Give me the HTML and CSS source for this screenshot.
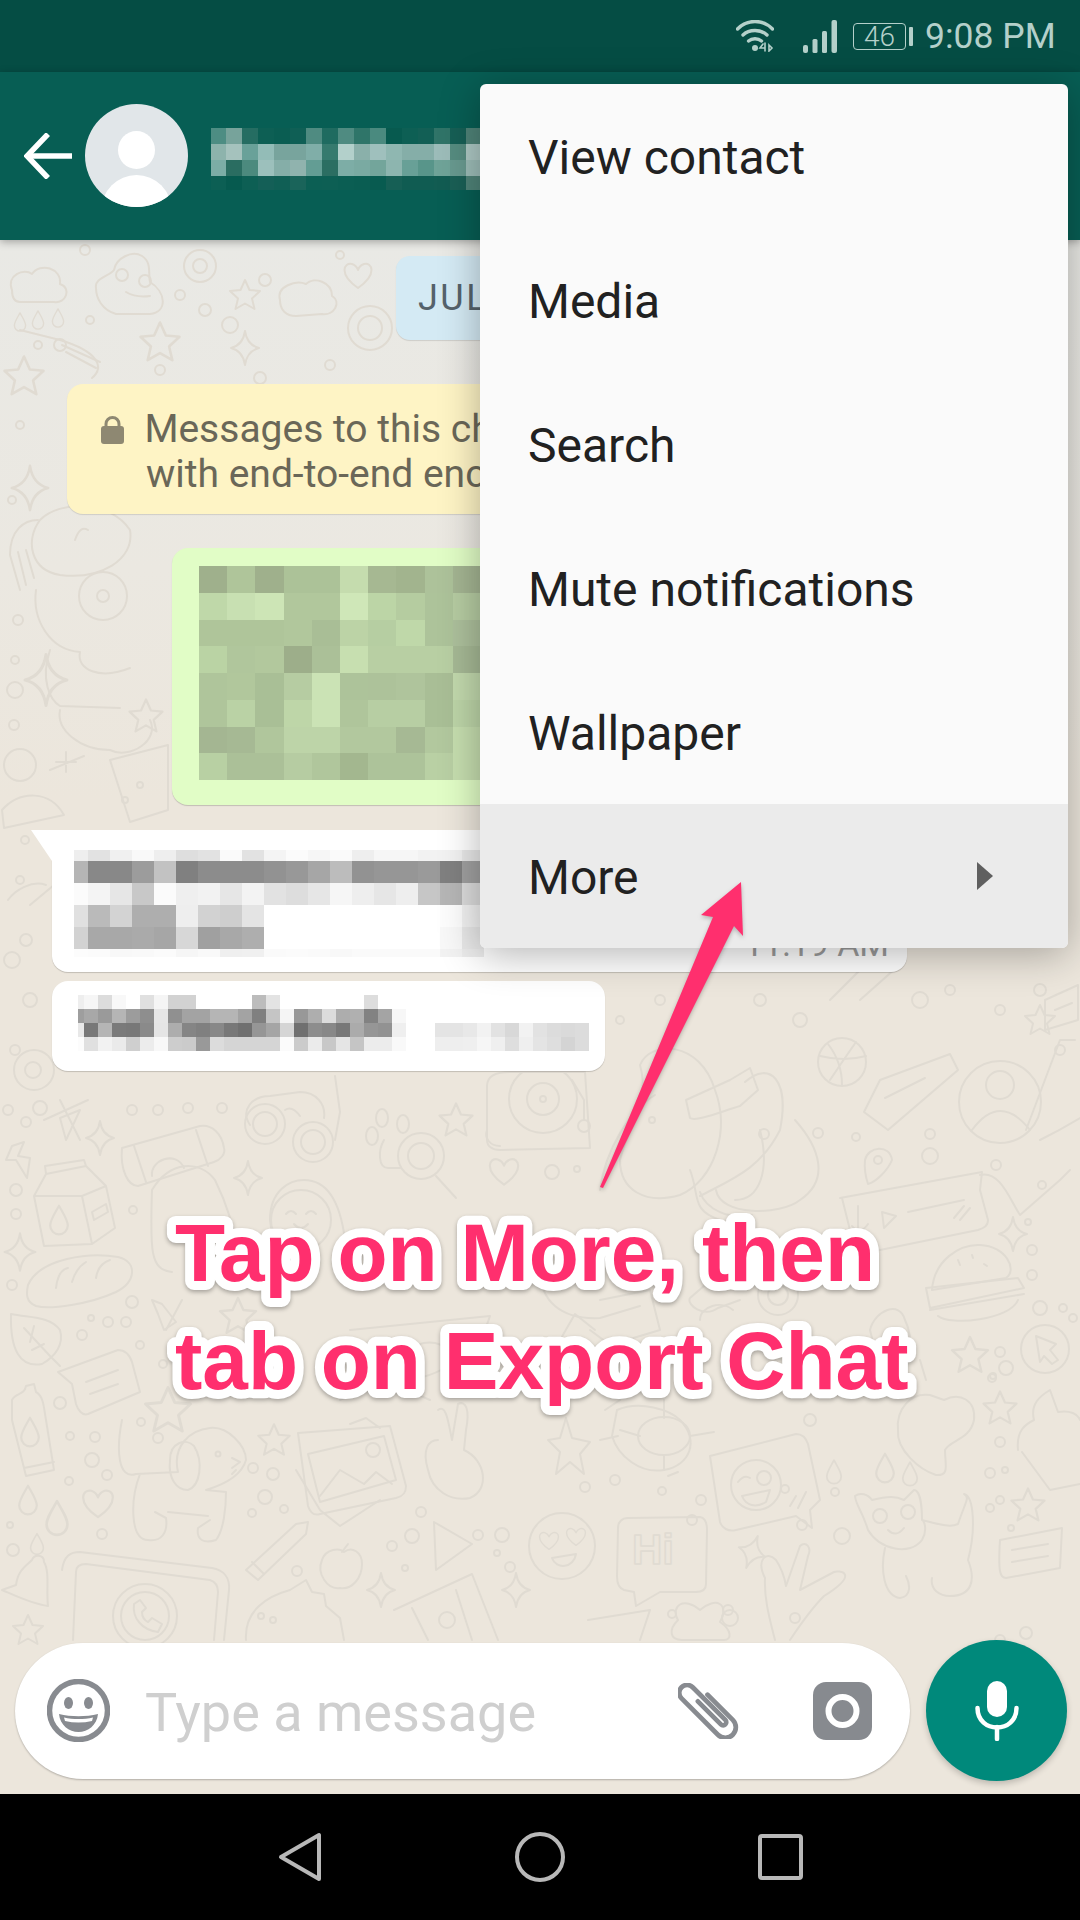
FILE: index.html
```html
<!DOCTYPE html>
<html lang="en">
<head>
    <meta charset="utf-8">
    <title>Export chat</title>
    <link rel="stylesheet" href="styles.css">
</head>
<body>
    <div class="phone">
        <!-- Status bar -->
        <div class="statusbar">
            <svg class="wifi" width="38" height="32" viewBox="0 0 38 32" fill="none" stroke="#b4d0ca" stroke-width="3.4" stroke-linecap="round">
                <path d="M1.5 9 C11 -1 27 -1 36.5 9"/>
                <path d="M7 15 C13 9 25 9 31 15"/>
                <path d="M12.5 21 C16 18 22 18 25.5 21"/>
                <circle cx="19" cy="28" r="3" fill="#b4d0ca" stroke="none"/>
                <path d="M27 24 L24 28 H29 M29 23 V31 M33 25 L36 28 L33 31 Z" stroke-width="1.6"/>
            </svg>
            <svg class="signal" width="34" height="33" viewBox="0 0 34 33" fill="#b4d0ca">
                <rect x="0" y="25" width="5" height="8" rx="2"/>
                <rect x="9.5" y="19" width="5" height="14" rx="1.5"/>
                <rect x="19" y="11" width="5" height="22" rx="1.5"/>
                <rect x="28.5" y="0" width="5.5" height="33" rx="2"/>
            </svg>
            <div class="battery"><span class="battery-level">46</span></div>
            <div class="battery-nub"></div>
            <span class="clock">9:08 PM</span>
        </div>

        <!-- Toolbar -->
        <div class="toolbar">
            <svg class="back" width="48" height="46" viewBox="0 0 48 46" fill="none" stroke="#fff" stroke-width="5.5">
                <path d="M48 23 H4"/>
                <path d="M24 1 L3 23 L24 45"/>
            </svg>
            <svg class="avatar" width="103" height="103" viewBox="0 0 103 103">
                <defs><clipPath id="avatar-clip"><circle cx="51.5" cy="51.5" r="51.5"/></clipPath></defs>
                <circle cx="51.5" cy="51.5" r="51.5" fill="#e1e6e9"/>
                <g clip-path="url(#avatar-clip)" fill="#fff">
                    <ellipse cx="51.5" cy="46" rx="18.5" ry="19"/>
                    <ellipse cx="51.5" cy="106" rx="35" ry="35"/>
                </g>
            </svg>
            <div class="mosaic mosaic-name" data-mosaic="name"></div>
        </div>

        <!-- Chat -->
        <div class="chat">
            <svg class="wallpaper" width="1080" height="1554" viewBox="0 240 1080 1554" fill="none" stroke="#e0dbd2" stroke-width="2" stroke-linecap="round" stroke-linejoin="round">
                <defs>
                    <path id="star" d="M0 -15 L4.5 -5 15 -4 7 3.5 9.5 14 0 8.5 -9.5 14 -7 3.5 -15 -4 -4.5 -5 Z"/>
                    <path id="sparkle" d="M0 -17 Q2 -3 14 0 Q2 3 0 17 Q-2 3 -14 0 Q-2 -3 0 -17 Z"/>
                    <path id="drop" d="M0 -13 C5 -4 8 0 8 5 A8 8 0 0 1 -8 5 C-8 0 -5 -4 0 -13 Z"/>
                    <path id="heart" d="M0 12 C-20 -2 -14 -14 -6 -12 C-3 -11 -1 -9 0 -6 C1 -9 3 -11 6 -12 C14 -14 20 -2 0 12 Z"/>
                </defs>

                <!-- top left -->
                <path d="M12 290 C6 275 24 268 32 274 C40 262 62 268 60 284 C72 288 66 304 54 302 L20 302 C14 302 12 296 12 290 Z"/>
                <path d="M96 288 C94 278 110 276 114 270 C116 258 132 250 142 256 C152 262 148 274 150 282 C166 292 168 312 150 314 L116 314 C102 310 96 298 96 288 Z"/>
                <circle cx="122" cy="275" r="6"/><circle cx="145" cy="281" r="6"/>
                <path d="M126 292 Q136 298 150 296"/>
                <circle cx="200" cy="266" r="16"/><circle cx="200" cy="266" r="7"/>
                <use href="#star" transform="translate(245 295)"/>
                <path d="M280 300 C276 286 296 280 306 284 C314 276 332 282 332 296 C342 302 334 316 322 314 L296 316 C286 316 280 310 280 300 Z"/>
                <use href="#heart" transform="translate(358 276)"/>
                <circle cx="370" cy="328" r="22"/><circle cx="370" cy="328" r="12"/>
                <use href="#sparkle" transform="translate(245 348)"/>
                <use href="#star" transform="translate(160 342) scale(1.3)"/>
                <path d="M20 330 L60 340 C100 352 104 368 92 378"/>
                <path d="M62 345 L100 362 M66 352 L96 368"/>
                <use href="#star" transform="translate(24 376) scale(1.3)"/>
                <use href="#drop" transform="translate(38 320) scale(.7)"/>
                <use href="#drop" transform="translate(20 322) scale(.7)"/>
                <use href="#drop" transform="translate(58 318) scale(.7)"/>
                <use href="#sparkle" transform="translate(30 488) scale(1.3)"/>

                <!-- left of the bubbles -->
                <path d="M40 520 C60 500 110 500 130 530 C135 560 100 580 60 575 C30 570 25 540 40 520 Z"/>
                <path d="M75 540 Q80 525 88 530"/>
                <path d="M10 555 C10 530 24 520 38 520 M20 590 L10 555 M26 585 L18 552 M34 578 L26 550"/>
                <path d="M36 590 C32 620 50 650 80 652 C76 670 100 680 130 668 M50 650 C40 680 50 700 60 706 L120 708"/>
                <path d="M60 710 C56 730 80 750 110 750 M110 750 C130 760 160 740 150 720"/>
                <circle cx="103" cy="596" r="24"/><circle cx="103" cy="596" r="6"/>
                <use href="#sparkle" transform="translate(46 680) scale(1.5)"/>
                <use href="#star" transform="translate(146 716) scale(1.1)"/>
                <circle cx="20" cy="765" r="16"/>
                <path d="M56 762 L76 762 M66 752 L66 772 M50 770 L84 756"/>
                <path d="M2 810 C20 790 50 790 64 815 L4 828 Z"/>
                <path d="M110 760 L168 745 L168 810 L130 822 Z"/>
                <circle cx="140" cy="785" r="3"/><circle cx="125" cy="800" r="3"/>
                <path d="M30 905 L60 880"/><path d="M8 900 C15 890 32 880 46 885"/>
                <path d="M14 1070 a20 20 0 1 0 40 0 a20 20 0 1 0 -40 0"/>
                <circle cx="33" cy="1070" r="8"/>

                <!-- below the bubbles -->
                <path d="M487 1086 C487 1076 495 1072 510 1072 L585 1072 L590 1148 L500 1150 C492 1150 487 1146 487 1140 Z"/>
                <circle cx="543" cy="1099" r="34"/><circle cx="543" cy="1099" r="16"/><circle cx="543" cy="1099" r="3"/>
                <path d="M572 1080 L584 1100 V1120"/>
                <circle cx="584" cy="1126" r="6"/>
                <path d="M250 1125 C240 1110 252 1096 270 1096 L300 1092 C316 1092 326 1104 324 1118"/>
                <circle cx="265" cy="1124" r="20"/><circle cx="265" cy="1124" r="12"/>
                <circle cx="313" cy="1142" r="20"/><circle cx="313" cy="1142" r="12"/>
                <path d="M285 1110 Q292 1105 300 1116 M335 1140 L340 1112 L335 1076"/>
                <ellipse cx="372" cy="1136" rx="6" ry="9"/><ellipse cx="382" cy="1118" rx="6" ry="9"/><ellipse cx="403" cy="1124" rx="6" ry="9"/>
                <circle cx="421" cy="1156" r="23"/><circle cx="421" cy="1156" r="13"/>
                <path d="M384 1140 C378 1150 378 1168 388 1168 L400 1168 M436 1176 L456 1198"/>
                <use href="#star" transform="translate(456 1120) scale(1.1)"/>
                <path d="M487 1130 C484 1138 490 1146 500 1146"/>
                <use href="#heart" transform="translate(504 1172) scale(1.05)"/>
                <path d="M640 1065 C650 1040 700 1040 715 1090 C730 1130 715 1180 680 1195 C645 1205 620 1190 620 1160 C630 1120 650 1100 640 1065 Z"/>
                <path d="M600 1190 C605 1150 630 1110 655 1095"/>
                <path d="M686 1100 L730 1080 L750 1068 L758 1090 L740 1106 C720 1112 696 1122 690 1118 Z"/>
                <path d="M745 1082 C770 1060 790 1080 780 1130 C760 1170 730 1180 700 1196 M760 1130 C770 1170 760 1200 735 1200"/>
                <circle cx="842" cy="1062" r="24"/><path d="M820 1056 Q844 1062 866 1056 M828 1044 Q842 1062 842 1085 M856 1042 Q842 1062 830 1080"/>
                <path d="M880 1080 L950 1054 L958 1070 L888 1130 L864 1112 Z M885 1098 L925 1078"/>
                <path d="M830 1000 L880 950 M860 1000 L905 960"/>
                <circle cx="1000" cy="1102" r="41"/><circle cx="1000" cy="1085" r="14"/><path d="M972 1130 Q1000 1092 1030 1130"/>
                <path d="M1026 1130 L1060 1040 L1075 1040"/>
                <path d="M1045 1000 L1078 985 L1078 1020 L1045 1030 Z M1055 1010 L1072 1003"/>
                <use href="#star" transform="translate(1040 1020)"/>

                <!-- left column -->
                <path d="M12 1146 L24 1142 L18 1156 L30 1158 L27 1178 L16 1160 L6 1160 Z"/>
                <path d="M34 1196 L46 1174 L86 1166 L106 1186 L82 1196 Z M82 1196 L92 1244 L44 1246 L34 1196 Z M82 1196 L106 1186 L115 1228 L92 1244 M46 1174 L45 1166 L84 1160 L86 1166"/>
                <use href="#drop" transform="translate(59 1220) scale(1.1)"/>
                <path d="M92 1212 L106 1204 L108 1212 L94 1220 Z"/>
                <path d="M122 1148 L200 1126 C212 1124 222 1134 224 1148 C226 1154 220 1160 214 1162 L138 1186 C128 1186 120 1170 122 1148 Z M134 1146 L146 1182 M196 1130 L208 1166"/>
                <path d="M152 1176 C150 1160 176 1150 184 1168"/>
                <path d="M152 1190 C150 1250 150 1270 172 1272 M152 1190 C170 1160 200 1160 215 1180 C225 1200 235 1230 240 1260"/>
                <use href="#sparkle" transform="translate(100 1138)"/>
                <use href="#sparkle" transform="translate(248 1178)"/>
                <use href="#sparkle" transform="translate(20 1252) scale(1.1)"/>
                <path d="M60 1118 L80 1110 L66 1140 Z M44 1120 L88 1100 M60 1100 L80 1140"/>
                <path d="M28 1285 C40 1258 90 1252 118 1257 C138 1262 136 1282 116 1292 C90 1304 50 1310 36 1306 C26 1302 26 1294 28 1285 Z M56 1288 Q58 1270 68 1268 M72 1282 Q76 1268 86 1262 M96 1278 Q98 1264 110 1260"/>
                <path d="M11 1314 C30 1318 50 1316 60 1330 C64 1344 56 1356 42 1364 C20 1368 10 1350 11 1314 Z M24 1328 L50 1356 M34 1326 L30 1342 M44 1344 L32 1350 M50 1356 L60 1366"/>
                <path d="M58 1372 L118 1350 C126 1350 130 1356 132 1362 L140 1392 L88 1414 C82 1416 78 1410 76 1404 L72 1384 Z M86 1382 L118 1370 M90 1394 L118 1384"/>
                <path d="M12 1400 C16 1392 24 1396 26 1386 L34 1384 L36 1392 C44 1396 44 1410 46 1420 L54 1470 L26 1476 L12 1420 Z M24 1468 L54 1462"/>
                <use href="#drop" transform="translate(30 1432) scale(1.1)"/>
                <use href="#star" transform="translate(168 1410) scale(1.5)"/>
                <path d="M122 1420 C116 1450 118 1480 136 1474 L178 1472 C172 1446 190 1430 210 1428 C228 1426 246 1446 246 1460 C242 1474 226 1484 206 1490 L226 1492 C226 1506 224 1530 216 1540 C204 1544 196 1540 198 1528 L210 1520 M168 1512 L208 1516 M140 1474 C130 1500 130 1540 148 1540 C162 1542 168 1532 166 1518 L155 1512"/>
                <path d="M170 1460 C170 1442 186 1438 194 1446 C204 1462 200 1486 188 1490 C176 1490 168 1478 170 1460 Z"/>
                <circle cx="218" cy="1454" r="2.5"/><path d="M232 1458 L240 1462 L232 1468 M236 1470 L232 1474"/>
                <use href="#star" transform="translate(274 1440) scale(1.05)"/>
                <use href="#drop" transform="translate(28 1500) scale(1.1)"/>
                <use href="#drop" transform="translate(57 1518) scale(1.3)"/>
                <use href="#drop" transform="translate(37 1544) scale(.8)"/>
                <use href="#heart" transform="translate(98 1504) scale(1.1)"/>
                <path d="M16 1585 C18 1570 26 1566 32 1560 C34 1554 44 1554 44 1562 C50 1572 46 1590 48 1606 C32 1604 16 1596 2 1590 Z"/>
                <use href="#star" transform="translate(28 1630)"/>
                <path d="M62 1570 C64 1556 70 1552 80 1552 L212 1568 C224 1570 230 1578 229 1590 L224 1640 M73 1640 L76 1572 C76 1566 80 1564 86 1564 L210 1580 C216 1582 218 1586 218 1592 L214 1640"/>
                <circle cx="145" cy="1616" r="32"/><circle cx="145" cy="1616" r="24"/>
                <path d="M134 1604 C132 1618 142 1630 158 1632 L162 1624 L152 1618 L148 1622 C144 1620 142 1616 142 1612 L146 1608 L140 1600 Z"/>

                <!-- middle -->
                <path d="M270 1220 C270 1190 290 1180 304 1180 C326 1180 340 1200 345 1240 L340 1270 M270 1220 C272 1240 280 1258 290 1264"/>
                <circle cx="301" cy="1220" r="30"/>
                <path d="M286 1214 Q291 1208 296 1214 M306 1214 Q311 1208 316 1214 M294 1224 Q301 1232 308 1224"/>
                <path d="M298 1433 L390 1426 L406 1486 C406 1492 404 1496 396 1498 L320 1514 C314 1516 310 1512 308 1506 Z"/>
                <path d="M308 1454 L384 1436 L396 1480 L320 1502 Z"/>
                <circle cx="373" cy="1450" r="7"/>
                <path d="M320 1496 L340 1470 L364 1484 L376 1472 L392 1484"/>
                <path d="M350 1424 L366 1418 L380 1428 M296 1470 L320 1510 L340 1526 L380 1500"/>
                <path d="M438 1410 C446 1404 448 1420 452 1440 L458 1404 C466 1400 470 1410 466 1430 L464 1450 C486 1460 490 1490 470 1498 C450 1502 432 1490 428 1470 C422 1450 428 1440 438 1440"/>
                <use href="#star" transform="translate(238 1316) scale(1.2)"/>
                <path d="M166 1330 L182 1300"/>
                <path d="M152 1300 L162 1304 L176 1322 L164 1330 L158 1314 Z"/>
                <path d="M246 1570 L296 1524 L308 1522 L306 1534 L258 1580 Z M252 1562 L264 1574"/>
                <path d="M322 1560 C326 1548 340 1548 344 1552 C352 1546 362 1552 362 1564 C362 1578 352 1590 340 1588 C328 1590 316 1574 322 1560 Z M342 1552 L348 1544"/>
                <path d="M434 1522 L472 1544 L436 1570 Z"/>
                <use href="#sparkle" transform="translate(381 1590)"/>
                <use href="#sparkle" transform="translate(516 1590)"/>
                <path d="M394 1610 L472 1574 L498 1640 M412 1608 L428 1640 M456 1590 L472 1640"/>
                <circle cx="447" cy="1620" r="8"/>
                <path d="M246 1640 C244 1610 268 1596 290 1590 L306 1580 L312 1592 L324 1594 L326 1606 L340 1618 L344 1640"/>
                <circle cx="261" cy="1616" r="3"/><circle cx="273" cy="1620" r="3"/>
                <circle cx="562" cy="1546" r="33"/>
                <use href="#heart" transform="translate(549 1541) scale(.7)"/>
                <use href="#heart" transform="translate(576 1537) scale(.7)"/>
                <path d="M552 1558 L576 1554 C574 1568 556 1570 552 1558 Z"/>
                <path d="M628 1518 L700 1517 C706 1518 707 1524 707 1530 L706 1584 C706 1590 702 1592 696 1592 L660 1592 L636 1606 L634 1592 L624 1590 C618 1588 617 1582 617 1576 L618 1528 C618 1522 622 1518 628 1518 Z"/>
                <text class="doodle-hi" x="632" y="1564">Hi</text>
                <path d="M617 1410 C640 1400 670 1410 680 1420 C700 1440 690 1466 664 1470 C640 1474 618 1456 612 1436 Z"/>
                <ellipse cx="664" cy="1436" rx="26" ry="19"/>
                <path d="M664 1418 L664 1400 M690 1436 L714 1432 M664 1456 L664 1470 M640 1436 L620 1430"/>
                <path d="M620 1400 L605 1410 M600 1440 L618 1436 M678 1472 L668 1476"/>
                <path d="M548 1440 L560 1438 L566 1418 L572 1438 L590 1442 L580 1454 L584 1474 L570 1462 L556 1474 L560 1452 Z"/>
                <path d="M710 1456 L796 1434 C802 1434 806 1438 808 1444 L820 1500 L810 1510 L812 1528 L796 1516 L736 1530 C728 1532 722 1528 720 1522 Z"/>
                <circle cx="756" cy="1485" r="25"/><circle cx="764" cy="1478" r="7"/>
                <path d="M738 1482 Q744 1474 750 1478 M742 1496 L770 1490 L766 1502 C756 1508 746 1506 742 1496 Z"/>
                <path d="M790 1506 L796 1496 M798 1508 L806 1492"/>
                <path d="M765 1578 C756 1560 766 1550 776 1560 C780 1566 784 1574 786 1586 L800 1546 C806 1540 812 1548 808 1556 L800 1590 L834 1572 C838 1570 862 1572 824 1596 C810 1610 800 1625 790 1640 M765 1578 C764 1600 770 1620 775 1640"/>
                <use href="#sparkle" transform="translate(752 1552) rotate(20)"/>
                <path d="M678 1620 C670 1606 684 1596 700 1610 C716 1596 730 1604 720 1622 C732 1630 732 1640 724 1640 L682 1640 C670 1640 668 1630 678 1620 Z"/>
                <path d="M640 1640 L650 1610 L588 1620"/>
                <path d="M855 1496 C860 1492 868 1494 872 1500 C888 1496 896 1496 904 1500 L914 1490 C920 1490 922 1506 922 1520 C938 1524 950 1528 958 1524 C966 1500 970 1498 964 1494 C974 1496 976 1530 968 1560 C976 1580 972 1596 950 1596 C940 1596 930 1590 932 1578 M885 1548 C880 1570 884 1596 900 1598 C912 1596 910 1584 906 1576 M868 1530 C862 1510 856 1506 855 1496 M868 1530 C880 1550 910 1556 922 1540 C928 1530 924 1520 922 1520"/>
                <circle cx="880" cy="1516" r="7"/><circle cx="908" cy="1512" r="7"/>
                <path d="M888 1530 Q896 1538 904 1528"/>
                <path d="M1000 1540 L1062 1528 L1060 1568 L1006 1578 C1000 1578 998 1572 1000 1540 Z M1012 1550 L1048 1544 M1012 1562 L1048 1556"/>
                <use href="#star" transform="translate(1028 1505) scale(1.1)"/>
                <use href="#star" transform="translate(1000 1408) scale(1.1)"/>
                <use href="#star" transform="translate(970 1355) scale(1.2)"/>
                <path d="M920 1360 L926 1380"/>
                <path d="M1018 1450 C1016 1430 1026 1424 1034 1420 C1030 1404 1040 1396 1050 1390 L1058 1412 C1070 1410 1078 1414 1080 1420 M1022 1452 L1050 1490 L1080 1484"/>
                <path d="M898 1430 C896 1410 910 1392 930 1395 L944 1400 C960 1392 976 1400 974 1420 C970 1440 950 1440 945 1450 C945 1465 950 1476 936 1475 C920 1470 896 1450 898 1430 Z"/>
                <use href="#drop" transform="translate(834 1472) scale(.9)"/>
                <use href="#drop" transform="translate(885 1468) scale(1.1)"/>
                <use href="#drop" transform="translate(910 1474) scale(.9)"/>
                <circle cx="1045" cy="1349" r="24"/>
                <path d="M1036 1336 L1056 1344 L1050 1350 L1058 1360 L1052 1364 L1044 1356 L1040 1362 Z"/>
                <path d="M840 1198 L982 1172 L980 1190 L988 1220 C988 1226 984 1228 978 1230 L880 1250 M842 1198 L850 1230"/>
                <path d="M858 1206 V1228 M852 1226 Q860 1236 868 1224 M882 1212 L884 1228 L896 1216 Z M908 1212 L964 1200"/>
                <path d="M954 1218 L964 1206 M960 1220 L970 1208"/>
                <path d="M980 1175 C1000 1170 1010 1200 1020 1215 L1060 1180 L1070 1170"/>
                <use href="#sparkle" transform="translate(1013 1234)"/>
                <path d="M932 1290 C934 1260 960 1244 980 1245 C1006 1246 1018 1270 1006 1278 Z"/>
                <path d="M926 1288 L1018 1278 L1024 1288 L930 1308 Z M930 1310 L1024 1294 M938 1316 C950 1326 1010 1320 1018 1300"/>
                <path d="M958 1260 l2 5 M972 1255 l1 3 M984 1264 l3 2"/>
                <path d="M1040 1140 C1060 1130 1080 1118 1080 1118"/>
                <path d="M865 1160 C868 1146 890 1144 892 1160 C888 1170 876 1182 868 1184 C866 1178 864 1170 865 1160 Z"/>
                <circle cx="878" cy="1160" r="4"/>
                <path d="M795 1120 C820 1148 830 1180 800 1200 C780 1216 720 1216 716 1190"/>
                <path d="M690 1170 C700 1195 690 1210 720 1220"/>
                <path d="M700 1192 C706 1210 730 1220 752 1215"/>
                <path d="M740 1260 C720 1270 700 1290 690 1298 C686 1305 704 1318 718 1308 L740 1300"/>
                <path d="M700 1320 C700 1306 722 1300 733 1310"/>
                <path d="M610 1240 L540 1270 C540 1300 560 1320 600 1318 L640 1306"/>
                <path d="M600 1300 L650 1290 L660 1330 L610 1345"/>
                <circle cx="778" cy="1295" r="20"/><circle cx="778" cy="1295" r="10"/>
                <path d="M560 1340 L575 1314 L595 1330 M590 1330 L610 1345"/>
                <path d="M870 1330 C875 1310 900 1300 905 1320 C915 1340 910 1370 895 1380 L880 1370 Z"/>
                <path d="M350 1330 L450 1320 L490 1316 C480 1350 440 1380 400 1380"/>
                <path d="M410 1350 C420 1340 440 1340 446 1350 M340 1400 C360 1390 390 1380 430 1400"/>

                <!-- little dots -->
                <g>
                    <circle cx="8" cy="1110" r="5"/><circle cx="26" cy="1122" r="5"/><circle cx="40" cy="1108" r="7"/>
                    <circle cx="132" cy="1110" r="5"/><circle cx="158" cy="1110" r="5"/><circle cx="188" cy="1108" r="5"/><circle cx="222" cy="1108" r="5"/>
                    <circle cx="16" cy="1190" r="6"/><circle cx="133" cy="1210" r="4"/><circle cx="16" cy="1214" r="5"/>
                    <circle cx="12" cy="1285" r="5"/><circle cx="132" cy="1302" r="6"/><circle cx="91" cy="1318" r="3"/><circle cx="108" cy="1322" r="5"/><circle cx="126" cy="1322" r="5"/>
                    <circle cx="82" cy="1335" r="5"/><circle cx="140" cy="1345" r="4"/><circle cx="163" cy="1364" r="4"/>
                    <circle cx="60" cy="1403" r="6"/><circle cx="141" cy="1422" r="4"/><circle cx="158" cy="1438" r="5"/>
                    <circle cx="70" cy="1436" r="4"/><circle cx="95" cy="1437" r="5"/><circle cx="92" cy="1460" r="7"/><circle cx="107" cy="1475" r="5"/><circle cx="69" cy="1481" r="4"/>
                    <circle cx="10" cy="1525" r="3"/><circle cx="13" cy="1550" r="6"/><circle cx="102" cy="1534" r="5"/>
                    <circle cx="253" cy="1468" r="5"/><circle cx="265" cy="1497" r="7"/><circle cx="252" cy="1513" r="4"/><circle cx="284" cy="1509" r="4"/><circle cx="273" cy="1474" r="6"/>
                    <circle cx="421" cy="1512" r="5"/><circle cx="392" cy="1546" r="5"/><circle cx="412" cy="1536" r="7"/><circle cx="297" cy="1571" r="5"/><circle cx="405" cy="1568" r="3"/><circle cx="478" cy="1535" r="5"/><circle cx="502" cy="1535" r="7"/><circle cx="497" cy="1553" r="3"/><circle cx="510" cy="1567" r="5"/>
                    <circle cx="552" cy="1172" r="7"/><circle cx="577" cy="1169" r="3"/><circle cx="652" cy="1120" r="3"/><circle cx="764" cy="1134" r="5"/><circle cx="818" cy="1133" r="5"/><circle cx="856" cy="1137" r="4"/><circle cx="930" cy="1134" r="5"/><circle cx="930" cy="1156" r="8"/>
                    <circle cx="1042" cy="1185" r="4"/><circle cx="996" cy="1165" r="5"/><circle cx="1028" cy="1222" r="3"/><circle cx="1032" cy="1250" r="5"/><circle cx="1032" cy="1275" r="5"/>
                    <circle cx="1040" cy="1308" r="7"/><circle cx="1063" cy="1308" r="4"/><circle cx="1073" cy="1318" r="4"/><circle cx="1000" cy="1352" r="5"/><circle cx="1006" cy="1368" r="7"/><circle cx="993" cy="1376" r="3"/><circle cx="992" cy="1378" r="4"/>
                    <circle cx="810" cy="1420" r="6"/><circle cx="1000" cy="1442" r="5"/><circle cx="990" cy="1473" r="5"/><circle cx="1005" cy="1470" r="3"/><circle cx="1000" cy="1500" r="4"/><circle cx="1011" cy="1528" r="3"/><circle cx="990" cy="1508" r="4"/>
                    <circle cx="785" cy="1489" r="4"/><circle cx="835" cy="1492" r="4"/><circle cx="585" cy="1487" r="5"/><circle cx="615" cy="1480" r="5"/><circle cx="662" cy="1491" r="4"/><circle cx="701" cy="1500" r="5"/>
                    <circle cx="730" cy="1618" r="8"/><circle cx="672" cy="1614" r="4"/><circle cx="1000" cy="1640" r="5"/><circle cx="1026" cy="1633" r="6"/>
                    <circle cx="728" cy="1610" r="5"/><circle cx="692" cy="1520" r="5"/><circle cx="802" cy="1525" r="5"/><circle cx="842" cy="1536" r="8"/><circle cx="795" cy="1618" r="5"/>
                    <circle cx="30" cy="1000" r="7"/><circle cx="15" cy="1050" r="5"/><circle cx="660" cy="1000" r="5"/><circle cx="760" cy="1000" r="6"/><circle cx="620" cy="1020" r="4"/><circle cx="950" cy="990" r="5"/><circle cx="920" cy="1000" r="8"/><circle cx="1000" cy="1010" r="5"/><circle cx="800" cy="1020" r="7"/><circle cx="1040" cy="990" r="6"/><circle cx="1060" cy="1050" r="5"/>
                    <circle cx="85" cy="250" r="5"/><circle cx="90" cy="320" r="4"/><circle cx="60" cy="345" r="6"/><circle cx="38" cy="345" r="4"/><circle cx="180" cy="295" r="5"/><circle cx="205" cy="310" r="6"/><circle cx="230" cy="325" r="8"/><circle cx="265" cy="280" r="6"/><circle cx="340" cy="255" r="4"/><circle cx="160" cy="370" r="5"/><circle cx="260" cy="378" r="6"/><circle cx="330" cy="365" r="5"/><circle cx="20" cy="425" r="4"/><circle cx="12" cy="500" r="4"/><circle cx="18" cy="620" r="5"/>
                    <circle cx="15" cy="660" r="4"/><circle cx="15" cy="690" r="8"/><circle cx="14" cy="725" r="5"/><circle cx="25" cy="840" r="4"/><circle cx="20" cy="880" r="4"/><circle cx="26" cy="940" r="6"/><circle cx="12" cy="960" r="8"/>
                </g>
            </svg>

            <div class="date-chip">JULY 25, 2018</div>

            <div class="notice">
                <span class="notice-line notice-first">
                    <svg class="lock" width="23" height="28" viewBox="0 0 23 28" fill="#8e8872">
                        <path d="M5 12 V8 a6.5 6.5 0 0 1 13 0 V12" fill="none" stroke="#8e8872" stroke-width="3"/>
                        <rect x="0" y="10" width="23" height="18" rx="3"/>
                    </svg>Messages to this chat and calls are now secured</span>
                <span class="notice-line">with end-to-end encryption. Tap for more info.</span>
            </div>

            <div class="bubble bubble-out">
                <div class="mosaic mosaic-green" data-mosaic="green"></div>
            </div>

            <div class="bubble bubble-in bubble-first">
                <div class="mosaic mosaic-first" data-mosaic="first"></div>
                <span class="msg-time">11:19 AM</span>
            </div>

            <div class="bubble bubble-in bubble-second">
                <div class="mosaic mosaic-second" data-mosaic="second"></div>
                <div class="mosaic mosaic-time" data-mosaic="time"></div>
            </div>

            <!-- Message input -->
            <div class="input-row">
                <div class="composer">
                    <svg class="icon-emoji" width="63" height="63" viewBox="0 0 63 63">
                        <circle cx="31.5" cy="31.5" r="29" fill="none" stroke="#888b90" stroke-width="5.5"/>
                        <ellipse cx="21.5" cy="24" rx="4.5" ry="6" fill="#888b90"/>
                        <ellipse cx="41.5" cy="24" rx="4.5" ry="6" fill="#888b90"/>
                        <path d="M12 35 C24 38 39 38 51 35 C50 46 41 53 31.5 53 C22 53 13 46 12 35 Z" fill="#888b90"/>
                        <path d="M17 38.5 C26 40.5 37 40.5 46 38.5 L45 42 C36 44 27 44 18 42 Z" fill="#fff"/>
                    </svg>
                    <span class="placeholder">Type a message</span>
                    <svg class="icon-clip" width="62" height="56" viewBox="0 0 62 56" fill="none" stroke="#888b90" stroke-width="4.5" stroke-linecap="round">
                        <g transform="translate(31 28) rotate(-45) scale(1.05)">
                            <path d="M10 -12 V22 a10 10 0 0 1 -20 0 V-27 a7.5 7.5 0 0 1 15 0 V17 a3 3 0 0 1 -6 0 V-14"/>
                        </g>
                    </svg>
                    <svg class="icon-camera" width="59" height="58" viewBox="0 0 59 58">
                        <rect width="59" height="58" rx="13" fill="#878a8f"/>
                        <circle cx="29.5" cy="29" r="14" fill="none" stroke="#fff" stroke-width="6"/>
                    </svg>
                </div>
                <div class="mic-btn">
                    <svg width="44" height="60" viewBox="0 0 44 60" fill="none" stroke="#fff" stroke-width="4.5" stroke-linecap="round">
                        <rect x="12" y="0" width="20" height="36" rx="10" fill="#fff" stroke="none"/>
                        <path d="M2.5 27 C2.5 53 41.5 53 41.5 27"/>
                        <path d="M22 46 V58"/>
                    </svg>
                </div>
            </div>
        </div>

        <!-- Bottom nav -->
        <div class="navbar">
            <svg width="44" height="50" viewBox="0 0 44 50" fill="none" stroke="#b8b8b8" stroke-width="4" stroke-linejoin="round">
                <path d="M41 3 V47 L3 25 Z"/>
            </svg>
            <svg width="50" height="50" viewBox="0 0 50 50" fill="none" stroke="#b8b8b8" stroke-width="4">
                <circle cx="25" cy="25" r="23"/>
            </svg>
            <svg width="45" height="46" viewBox="0 0 45 46" fill="none" stroke="#b8b8b8" stroke-width="4">
                <rect x="2" y="2" width="41" height="42" rx="2"/>
            </svg>
        </div>

        <!-- Overflow menu -->
        <div class="menu">
            <div class="menu-item">View contact</div>
            <div class="menu-item">Media</div>
            <div class="menu-item">Search</div>
            <div class="menu-item">Mute notifications</div>
            <div class="menu-item">Wallpaper</div>
            <div class="menu-item menu-item-active">More<span class="menu-caret"></span></div>
        </div>

        <!-- Annotation over the screenshot -->
        <svg class="arrow" width="160" height="320" viewBox="595 875 160 320">
            <path d="M600 1187 L713 917 L701 915 L741 882 L743 936 L734 926 L603 1188 Z" fill="#ff2f6e"/>
        </svg>
        <svg class="callout" width="800" height="240" viewBox="0 0 800 240">
            <text x="15" y="91">Tap on More, then</text>
            <text x="15" y="198.5">tab on Export Chat</text>
        </svg>
    </div>
    <script src="script.js"></script>
</body>
</html>
```

FILE: styles.css
```css
/* General Styles */
body {
    margin: 0;
    font-family: Roboto, "Noto Sans", sans-serif;
}

.phone {
    position: relative;
    width: 1080px;
    height: 1920px;
    display: flex;
    flex-direction: column;
    overflow: hidden;
}

/* Status bar */
.statusbar {
    height: 72px;
    flex-shrink: 0;
    display: flex;
    align-items: center;
    padding-left: 736px;
    box-sizing: border-box;
    background-color: #054d44;
    color: #b4d0ca;
}

.statusbar > * {
    flex-shrink: 0;
}

.wifi {
    margin-right: 29px;
}

.signal {
    margin-right: 16px;
}

.battery {
    width: 53px;
    height: 27px;
    box-sizing: border-box;
    border: 1.5px solid #b4d0ca;
    border-radius: 4px;
    display: flex;
    align-items: center;
    justify-content: center;
}

.battery-level {
    font-size: 28px;
    font-weight: 300;
}

.battery-nub {
    width: 4px;
    height: 19px;
    margin-left: 3px;
    margin-right: 12px;
    background-color: #b4d0ca;
    border-radius: 1px;
}

.clock {
    font-size: 35.5px;
    white-space: nowrap;
}

/* Toolbar */
.toolbar {
    position: relative;
    z-index: 2;
    height: 168px;
    flex-shrink: 0;
    display: flex;
    align-items: center;
    padding-left: 24px;
    box-sizing: border-box;
    background-color: #075e54;
    box-shadow: 0 2px 8px rgba(0, 0, 0, 0.3);
}

.back {
    margin-right: 13px;
}

.avatar {
    margin-right: 23px;
    margin-top: -1px;
}

/* Pixelated (redacted) blocks, cells come from script.js */
.mosaic {
    display: grid;
    flex-shrink: 0;
}

.mosaic-name {
    margin-top: 6px;
    grid-template-columns: 15px repeat(16, 16px);
    grid-template-rows: 16px 16px 16px 14px;
}

.mosaic-green {
    grid-template-columns: repeat(10, 28.2px);
    grid-template-rows: repeat(8, 26.75px);
}

.mosaic-first {
    grid-template-columns: 14px repeat(18, 22px);
    grid-template-rows: 11px 22px 22px 22px 22px 8px;
}

.mosaic-second {
    grid-template-columns: 6px repeat(23, 14px);
    grid-template-rows: repeat(4, 14px);
}

.mosaic-time {
    grid-template-columns: repeat(11, 14px);
    grid-template-rows: repeat(2, 14px);
}

/* Chat */
.chat {
    position: relative;
    flex: 1;
    display: flex;
    flex-direction: column;
    align-items: flex-start;
    padding-top: 16px;
    box-sizing: border-box;
    background: linear-gradient(#e9e9e5 0, #ebe8e1 330px, #ece6dc 560px);
}

.wallpaper {
    position: absolute;
    left: 0;
    top: 0;
}

.doodle-hi {
    font-family: "Liberation Sans", sans-serif;
    font-size: 42px;
    font-weight: bold;
    stroke-width: 1.6;
}

.date-chip {
    position: relative;
    align-self: center;
    width: 288px;
    height: 84px;
    padding-left: 22px;
    box-sizing: border-box;
    line-height: 84px;
    white-space: nowrap;
    font-size: 36px;
    letter-spacing: 2.5px;
    color: #55626b;
    background-color: #d4eaf4;
    border-radius: 14px;
    box-shadow: 0 1px 1px rgba(0, 0, 0, 0.12);
}

.notice {
    position: relative;
    align-self: center;
    width: 946px;
    height: 130px;
    margin-top: 44px;
    padding-top: 23px;
    box-sizing: border-box;
    text-align: center;
    font-size: 39px;
    line-height: 45px;
    color: #6a6758;
    background-color: #fef4c5;
    border-radius: 16px;
    box-shadow: 0 1px 1px rgba(0, 0, 0, 0.12);
}

.notice-line {
    display: block;
    white-space: nowrap;
}

.notice-first {
    padding-left: 8px;
}

.lock {
    margin-right: 20px;
    vertical-align: -2px;
}

.bubble {
    position: relative;
    box-sizing: border-box;
    border-radius: 16px;
    box-shadow: 0 1px 1px rgba(0, 0, 0, 0.18);
}

.bubble-out {
    width: 880px;
    height: 257px;
    margin-top: 34px;
    margin-left: 172px;
    padding: 18px 0 0 27px;
    background-color: #e1fdc6;
}

.bubble-in {
    margin-left: 52px;
    background-color: #fff;
}

.bubble-first {
    width: 855px;
    height: 142px;
    margin-top: 25px;
    padding: 20px 0 0 22px;
    border-top-left-radius: 0;
}

.bubble-first::before {
    content: "";
    position: absolute;
    left: -21px;
    top: 0;
    width: 21px;
    height: 31px;
    background-color: #fff;
    clip-path: polygon(0 0, 100% 0, 100% 100%);
}

.msg-time {
    position: absolute;
    right: 18px;
    bottom: 8px;
    font-size: 34px;
    line-height: 40px;
    color: #9b9b9b;
}

.bubble-second {
    display: flex;
    align-items: flex-end;
    gap: 29px;
    width: 553px;
    height: 90px;
    margin-top: 9px;
    padding: 14px 0 20px 26px;
}

/* Message input */
.input-row {
    position: relative;
    align-self: stretch;
    margin-top: auto;
    display: flex;
    align-items: center;
    padding: 0 13px 13px 15px;
    gap: 16px;
}

.composer {
    flex: 1;
    height: 136px;
    display: flex;
    align-items: center;
    padding: 0 38px 0 32px;
    background-color: #fff;
    border-radius: 68px;
    box-shadow: 0 1px 2px rgba(0, 0, 0, 0.25);
}

.placeholder {
    flex: 1;
    margin-left: 35px;
    margin-top: 3px;
    font-size: 54px;
    color: #cfcfcf;
    white-space: nowrap;
}

.icon-clip {
    margin-right: 73px;
}

.mic-btn {
    width: 141px;
    height: 141px;
    flex-shrink: 0;
    display: flex;
    align-items: center;
    justify-content: center;
    background-color: #00897b;
    border-radius: 50%;
    box-shadow: 0 3px 6px rgba(0, 0, 0, 0.2);
}

/* Bottom nav */
.navbar {
    height: 126px;
    flex-shrink: 0;
    display: flex;
    align-items: center;
    justify-content: center;
    gap: 193px;
    background-color: #000;
}

/* Overflow menu */
.menu {
    position: absolute;
    left: 480px;
    top: 84px;
    z-index: 3;
    width: 588px;
    background-color: #fafafa;
    border-radius: 6px;
    box-shadow: 0 6px 40px rgba(0, 0, 0, 0.3);
    overflow: hidden;
}

.menu-item {
    position: relative;
    height: 144px;
    line-height: 147px;
    padding-left: 48px;
    font-size: 48px;
    color: #212121;
}

.menu-item-active {
    background-color: #ebebeb;
}

.menu-caret {
    position: absolute;
    right: 75px;
    top: 58px;
    border-style: solid;
    border-width: 14px 0 14px 16px;
    border-color: transparent transparent transparent #5f5f5f;
}

/* Annotation */
.arrow {
    position: absolute;
    left: 595px;
    top: 875px;
    z-index: 4;
    filter: drop-shadow(0 2px 2px rgba(0, 0, 0, 0.25));
}

.callout {
    position: absolute;
    left: 160px;
    top: 1190px;
    z-index: 4;
    overflow: visible;
    font-family: "Liberation Sans", Arial, sans-serif;
    font-size: 82px;
    font-weight: bold;
    fill: #ff2f6e;
    stroke: #fff;
    stroke-width: 18px;
    stroke-linejoin: round;
    paint-order: stroke fill;
    filter: drop-shadow(0 2px 2px rgba(0, 0, 0, 0.3));
}
```

FILE: script.js
```js
// Pixelated blocks from the screenshot. Grey rows are written as 2 digit hex.
const greys = function(rows) {
    return rows.map(function(row) {
        return row.split(' ').map(function(v) {
            return v.length === 2 ? '#' + v + v + v : '#' + v;
        });
    });
};

const mosaics = {
    name: greys([
        '4d8d83 77a39b 256d62 0d5f54 0a5d52 0f5f55 4f8b81 1f6b60 4f8b81 2f7569 4a8a7f 075a4f 0d5f54 125f55 307468 165f55 4f8378',
        '8db3ac a5c2bd 69a199 93bcb7 78a49d 78a49d 80aea8 367a6e b3d0cb 8ab0aa 9fc0bd 8fb7b1 85aea8 85aea8 9cbcb9 568c80 adc8c4',
        '7cada6 2a6d61 4c8a7e 9cc0bc 85aea8 90b3ae 639d94 2b6e62 7dada6 7aaaa2 73a59b 8db5af 68a097 58958a 6fa398 68998f 9dbdb8',
        '0c5f54 065a4f 0d5f54 145f57 105f55 1a645a 0c5f54 0d5f54 0b5e53 0a5d52 085b50 165f55 105c52 105c52 125c52 1a5f55 4f8378'
    ]),
    green: greys([
        '9fb08c afc59a 9fb08c acc298 acc298 c5dcae a6b892 a2b48e adc29a a4b592',
        'bfd8a9 c8e0b2 cde5b6 b1c79c b1c79c cfe7b8 bcd5a6 b5cca0 adc39a b6cca2',
        'afc59a afc59a afc59a b1c79c a9be96 bcd3a6 b6cea2 bfd8a9 adc39a adc09c',
        'bad3a4 b0c69c b2c89d 9dae8a abc098 c7dfb0 b8cfa3 b8cfa3 b8cfa3 a6b995',
        'afc59b b1c79c a9bf96 b6cca2 cbe3b5 adc39a adc29a afc49c a9be96 c2d9ad',
        'afc59b bad2a5 a9bf96 bed6a8 cbe3b5 afc59b b7cea3 b7cea3 a9bf96 bdd5a8',
        'a4b692 a6b994 b0c69c bdd4a8 bdd4a8 b2c89e b2c89e a6b994 b2c89e c6deaf',
        'b8d0a3 abc098 abc098 b6cca2 b0c69c a3b78f adc39a adc39a b9d0a4 c6deaf'
    ]),
    first: greys([
        'ee e2 f0 f9 ee de e2 fa e2 f4 fb f6 fa ee f6 f6 f2 f2 e8',
        'b5 88 88 9c c2 80 8c 8c 8c 92 98 a6 bc 92 96 96 9a 80 a0',
        'fb f4 e6 c8 fb ef f2 e6 f3 e2 dd e6 f6 ee e6 ee c6 b6 dc',
        'e0 ba d3 ae ae ee d2 ce e4 ff ff ff ff ff ff ff ff fd f2',
        'd2 a8 a8 aa a6 d7 a0 a8 ae ff ff ff ff ff ff ff ff f8 e8',
        'fc fb f8 f9 fb f6 f9 ef f0 fa fb fa f8 fa fa fa fa f2 ec'
    ]),
    second: greys([
        'ee f6 dc f8 ff e0 f5 d2 d2 ff ff ff ff bc e3 ff ff ff ff ff ff dd ff ff',
        '9e a8 9a b5 9c 8e e6 90 a3 a3 b5 b5 a3 80 c5 f5 98 ae dc ad b0 82 a4 f7',
        'e8 78 b5 7a 78 8a e5 ad 85 80 88 78 70 96 a5 d5 70 8d 88 78 ab 96 92 ef',
        'fc e0 f2 ea cf ec f8 cd cb 99 dc d5 d5 d5 d5 fb cb eb c8 e5 c5 ec ec f9'
    ]),
    time: greys([
        'e4 e4 e8 f2 e2 d8 f2 e2 dc da dc',
        'ee ee ef f6 ef de ef e4 de d4 dc'
    ])
};

document.querySelectorAll('[data-mosaic]').forEach(function(block) {
    mosaics[block.dataset.mosaic].forEach(function(row) {
        row.forEach(function(color) {
            const cell = document.createElement('i');
            cell.style.backgroundColor = color;
            block.appendChild(cell);
        });
    });
});
```
